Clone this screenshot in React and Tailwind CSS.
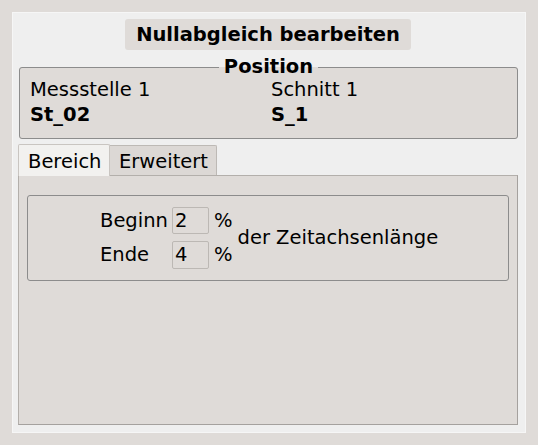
import React from "react";

export default function App() {
  const font = { fontFamily: '"DejaVu Sans", sans-serif' };
  return (
    <div
      className="w-[538px] h-[445px] bg-[#dfdbd8] p-[12px] text-[19.5px] leading-[22px] text-black"
      style={font}
    >
      <div className="w-[514px] h-[421px] bg-[#efefef] border border-[#f6f6f6] pt-[6px] pl-[5px] pr-[7px] pb-[7px] flex flex-col">
        <div className="mx-auto h-[31px] px-[11px] bg-[#dfdbd8] rounded-[3px] flex items-center font-bold">
          Nullabgleich bearbeiten
        </div>
        <fieldset className="mt-[6px] ml-[1px] border border-[#8c8c8c] rounded-[3px] bg-[#dfdbd8] px-[10px] pb-[12px] pt-[1px]">
          <legend className="mx-auto px-[5px] font-bold leading-[22px]">Position</legend>
          <div className="grid grid-cols-[241px_1fr] gap-y-[3px]">
            <div>Messstelle 1</div>
            <div>Schnitt 1</div>
            <div className="font-bold">St_02</div>
            <div className="font-bold">S_1</div>
          </div>
        </fieldset>
        <div className="mt-[5px] flex flex-col flex-1">
          <div className="flex items-end h-[32px]">
            <div className="h-[32px] w-[92px] pl-[9px] pt-[6px] bg-[#f2f1ef] border border-b-0 border-[#c9c5c1] rounded-t-[2px] relative z-10">
              Bereich
            </div>
            <div className="h-[31px] w-[107px] pl-[9px] pt-[5px] bg-[#dcd8d5] border border-l-0 border-b-0 border-[#bdb9b5] rounded-tr-[2px]">
              Erweitert
            </div>
          </div>
          <div className="flex-1 -mt-[1px] bg-[#dfdbd8] border border-[#b3afab] border-b-[#a5a19e] border-r-[#a5a19e] pt-[19px] px-[8px]">
            <div className="h-[86px] border border-[#8c8c8c] rounded-[3px] flex items-center pl-[72px]">
              <div className="grid grid-cols-[72px_37px_auto] gap-y-[7px] items-center">
                <div>Beginn</div>
                <div className="h-[27px] border border-[#bcb8b4] rounded-[2px] pl-[2px] flex items-center">2</div>
                <div className="pl-[5px]">%</div>
                <div>Ende</div>
                <div className="h-[28px] border border-[#bcb8b4] rounded-[2px] pl-[2px] flex items-center">4</div>
                <div className="pl-[5px]">%</div>
              </div>
              <div className="ml-[5px]">der Zeitachsenlänge</div>
            </div>
          </div>
        </div>
      </div>
    </div>
  );
}
